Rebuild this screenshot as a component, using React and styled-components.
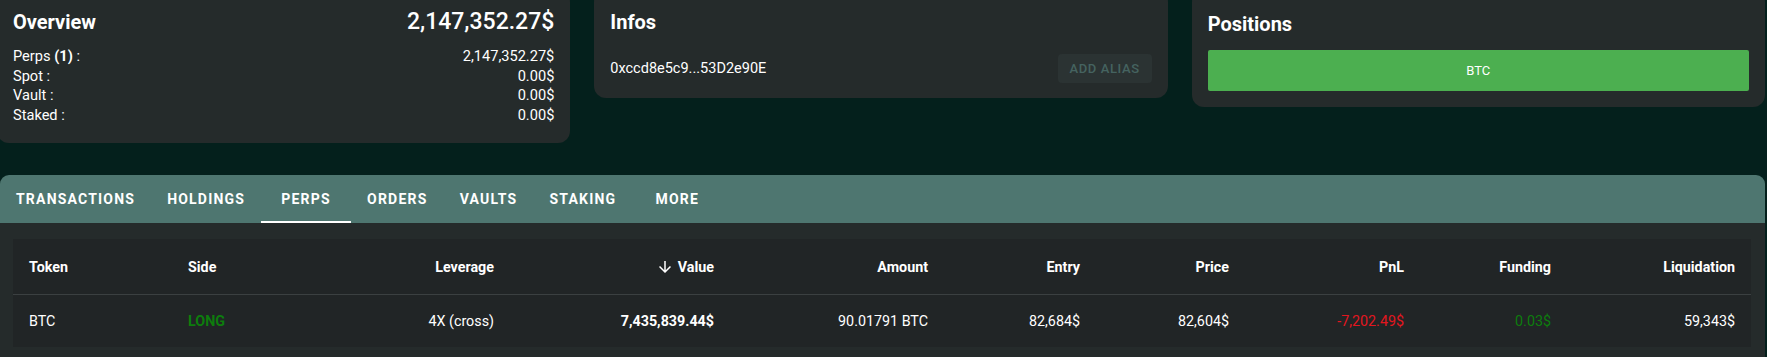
import styled, { createGlobalStyle } from "styled-components";

const GlobalStyle = createGlobalStyle`
  body {
    margin: 0;
    background: #04201c;
    font-family: Roboto, "Liberation Sans", sans-serif;
    color: #ffffff;
    overflow: hidden;
  }
`;

const overview = [
  { label: "Perps", count: 1, value: "2,147,352.27$" },
  { label: "Spot", value: "0.00$" },
  { label: "Vault", value: "0.00$" },
  { label: "Staked", value: "0.00$" },
];

const tabs = ["Transactions", "Holdings", "Perps", "Orders", "Vaults", "Staking", "More"];

const columns = [
  { key: "token", label: "Token", align: "left" },
  { key: "side", label: "Side", align: "left" },
  { key: "leverage", label: "Leverage", align: "right" },
  { key: "value", label: "Value", align: "right", sorted: true },
  { key: "amount", label: "Amount", align: "right" },
  { key: "entry", label: "Entry", align: "right" },
  { key: "price", label: "Price", align: "right" },
  { key: "pnl", label: "PnL", align: "right" },
  { key: "funding", label: "Funding", align: "right" },
  { key: "liquidation", label: "Liquidation", align: "right" },
];

const positions = [
  {
    token: "BTC",
    side: "LONG",
    leverage: "4X (cross)",
    value: "7,435,839.44$",
    amount: "90.01791 BTC",
    entry: "82,684$",
    price: "82,604$",
    pnl: "-7,202.49$",
    funding: "0.03$",
    liquidation: "59,343$",
  },
];

const cellTone = {
  side: { color: "#0d7d0d", weight: 700 },
  value: { weight: 700 },
  pnl: { color: "#e3161f" },
  funding: { color: "#0d7d0d" },
};

const ArrowDown = () => (
  <SortIcon viewBox="0 0 24 24">
    <path d="M20 12l-1.41-1.41L13 16.17V4h-2v12.17l-5.58-5.59L4 12l8 8 8-8z" />
  </SortIcon>
);

const App = () => {
  return (
    <Page>
      <GlobalStyle />
      <TopRow>
        <Card $bottom={18}>
          <CardHead>
            <Title>Overview</Title>
            <Total>2,147,352.27$</Total>
          </CardHead>
          <Lines>
            {overview.map((line) => (
              <Line key={line.label}>
                <span>
                  {line.label}
                  {line.count && <b> ({line.count})</b>} :
                </span>
                <span>{line.value}</span>
              </Line>
            ))}
          </Lines>
        </Card>

        <Card $bottom={15}>
          <Title>Infos</Title>
          <AddressRow>
            <Address>0xccd8e5c9...53D2e90E</Address>
            <AliasButton disabled>Add alias</AliasButton>
          </AddressRow>
        </Card>

        <Card $top={18}>
          <Title>Positions</Title>
          <PositionButton>BTC</PositionButton>
        </Card>
      </TopRow>

      <Section>
        <TabBar>
          {tabs.map((tab) => (
            <Tab key={tab} $active={tab === "Perps"}>
              {tab}
            </Tab>
          ))}
        </TabBar>
        <TableArea>
          <Table>
            <HeadRow>
              {columns.map((col) => (
                <Cell key={col.key} $align={col.align} $weight={700}>
                  {col.sorted && <ArrowDown />}
                  {col.label}
                </Cell>
              ))}
            </HeadRow>
            {positions.map((pos) => (
              <BodyRow key={pos.token}>
                {columns.map((col) => (
                  <Cell
                    key={col.key}
                    $align={col.align}
                    $color={cellTone[col.key]?.color}
                    $weight={cellTone[col.key]?.weight}
                  >
                    {pos[col.key]}
                  </Cell>
                ))}
              </BodyRow>
            ))}
          </Table>
        </TableArea>
      </Section>
    </Page>
  );
};

const Page = styled.div`
  width: 1767px;
  padding-right: 2px;
  box-sizing: border-box;
`;

const TopRow = styled.div`
  display: grid;
  grid-template-columns: repeat(3, 1fr);
  gap: 24px;
  align-items: start;
  margin: -10px 0 0 -3px;
`;

const Card = styled.div`
  background: #252b2b;
  border-radius: 12px;
  padding: ${(p) => p.$top || 16}px 16px ${(p) => p.$bottom || 16}px;
  display: flex;
  flex-direction: column;
`;

const CardHead = styled.div`
  display: flex;
  justify-content: space-between;
  align-items: center;
`;

const Title = styled.h2`
  margin: 0;
  font-size: 20px;
  font-weight: 700;
  line-height: 32px;
`;

const Total = styled.div`
  font-size: 23px;
  font-weight: 500;
  line-height: 32px;
`;

const Lines = styled.div`
  margin-top: 9px;
  display: flex;
  flex-direction: column;
`;

const Line = styled.div`
  display: flex;
  justify-content: space-between;
  font-size: 14.6px;
  line-height: 19.5px;

  b {
    font-weight: 700;
  }
`;

const AddressRow = styled.div`
  margin-top: 16px;
  display: flex;
  justify-content: space-between;
  align-items: center;
`;

const Address = styled.span`
  font-size: 14.5px;
`;

const AliasButton = styled.button`
  height: 29px;
  padding: 0 12px;
  border: none;
  border-radius: 4px;
  background: #2b3333;
  color: #456360;
  font-family: inherit;
  font-size: 13px;
  font-weight: 500;
  letter-spacing: 0.6px;
  text-transform: uppercase;
`;

const PositionButton = styled.button`
  margin-top: 10px;
  height: 41px;
  width: 100%;
  border: none;
  border-radius: 2px;
  background: #4caf50;
  color: #ffffff;
  font-family: inherit;
  font-size: 13px;
`;

const Section = styled.section`
  margin-top: 32px;
`;

const TabBar = styled.nav`
  display: flex;
  height: 48px;
  background: #4e7670;
  border-radius: 9px 9px 0 0;
`;

const Tab = styled.div`
  min-width: 90px;
  padding: 0 16px;
  box-sizing: border-box;
  display: flex;
  align-items: center;
  justify-content: center;
  font-size: 14px;
  font-weight: 700;
  letter-spacing: 1.2px;
  text-transform: uppercase;
  color: #ffffff;
  box-shadow: ${(p) => (p.$active ? "inset 0 -2px 0 #ffffff" : "none")};
`;

const TableArea = styled.div`
  background: #252b2b;
  padding: 16px 14px 10px 13px;
`;

const Table = styled.div`
  background: #212526;
`;

const HeadRow = styled.div`
  display: grid;
  grid-template-columns: 159px 159px 179px 220px 214px 152px 149px 175px 147px 1fr;
  height: 55px;
  border-bottom: 1px solid #3b4041;
`;

const BodyRow = styled(HeadRow)`
  height: 52px;
  border-bottom: none;
`;

const Cell = styled.div`
  display: flex;
  align-items: center;
  justify-content: ${(p) => (p.$align === "right" ? "flex-end" : "flex-start")};
  padding: 0 16px;
  font-size: 14.3px;
  font-weight: ${(p) => p.$weight || 400};
  color: ${(p) => p.$color || "#ffffff"};
  white-space: nowrap;
`;

const SortIcon = styled.svg`
  width: 18px;
  height: 18px;
  margin-right: 4px;
  fill: #ffffff;
`;

export default App;
